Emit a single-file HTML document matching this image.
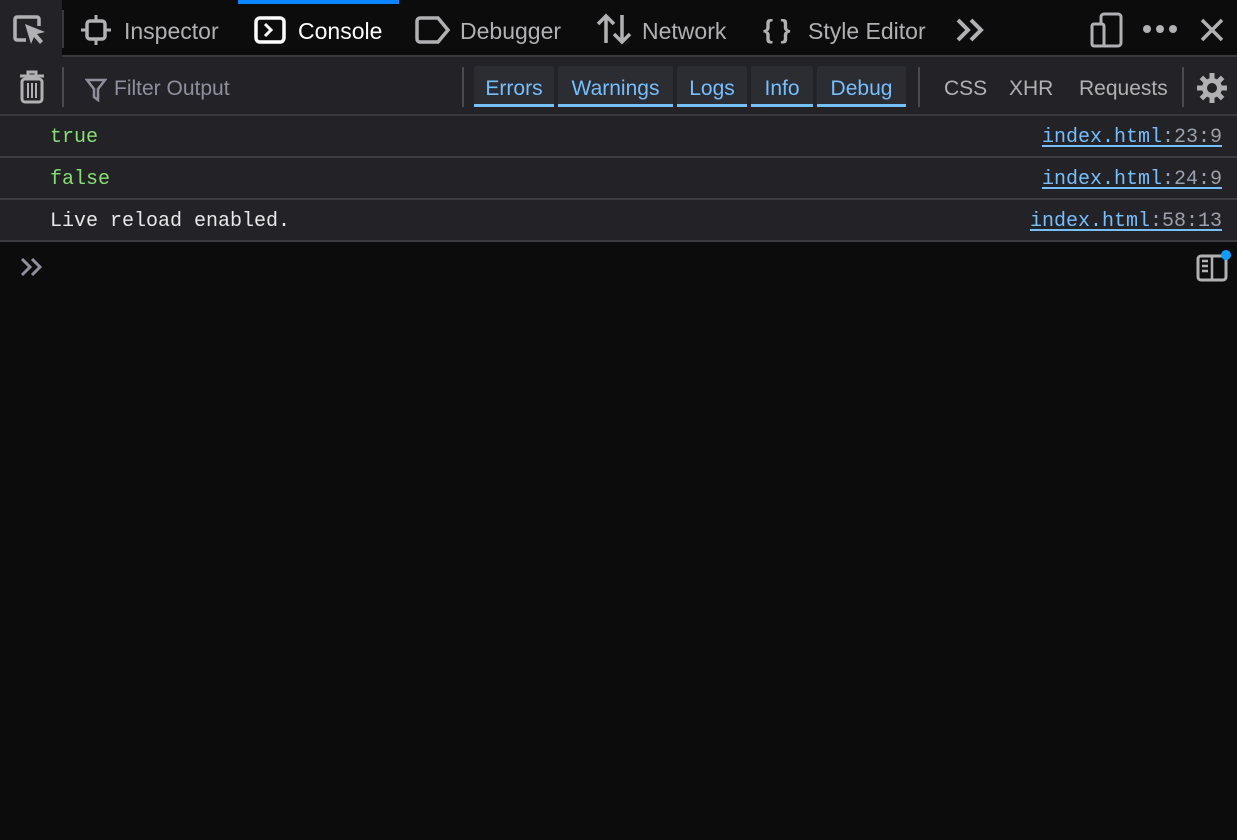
<!DOCTYPE html>
<html><head><meta charset="utf-8"><style>
*{margin:0;padding:0;box-sizing:border-box}
body{width:1237px;height:840px;background:#0c0c0d;font-family:"Liberation Sans",sans-serif;overflow:hidden;position:relative}
.abs{position:absolute}
#top{left:0;top:0;width:1237px;height:57px;background:#0c0c0d;border-bottom:2px solid #38383d}
.tab{position:absolute;top:0;height:57px;color:#b1b1b3;font-size:23px;line-height:62px}
#filter{left:0;top:57px;width:1237px;height:59px;background:#232327;border-bottom:2px solid #38383d}
.fb{position:absolute;top:9px;height:41px;background:#2c2c33;border-radius:3px 3px 0 0;border-bottom:3px solid #75bfff;color:#75bfff;font-size:21px;line-height:45px;text-align:center}
.ft{position:absolute;top:9px;height:41px;color:#b1b1b3;font-size:21px;line-height:45px}
.sep{position:absolute;width:2px;background:#4a4a4f}
.row{position:absolute;left:0;width:1237px;height:42px;background:#232327;border-bottom:2px solid #3b3b40;font-family:"Liberation Mono",monospace;font-size:20px;line-height:44px}
.row .m{position:absolute;left:50px}
.row .l{position:absolute;right:15px;color:#75bfff;text-decoration:underline;text-underline-offset:3px}
.row .l span{color:#9aa0ad}
</style></head><body>
<div id="top" class="abs">
 <div class="abs" style="left:0;top:0;width:62px;height:57px;background:#232327"></div>
 <svg class="abs" style="left:12px;top:14px" width="36" height="32" viewBox="0 0 36 32"><path d="M14 26H5a2 2 0 0 1-2-2V5a2 2 0 0 1 2-2h20a2 2 0 0 1 2 2v7" fill="none" stroke="#b1b1b3" stroke-width="3.5"/><path d="M13 10l20 8-8 2 6 7-3 3-6-7-3 7z" fill="#b1b1b3"/></svg>
 <div class="sep" style="left:62px;top:10px;height:38px;background:#38383d"></div>
 <svg class="abs" style="left:80px;top:14px" width="32" height="32" viewBox="0 0 32 32"><rect x="7" y="7" width="18" height="18" rx="3" fill="none" stroke="#b1b1b3" stroke-width="3.5"/><path d="M16 1v6M16 25v6M1 16h6M25 16h6" stroke="#b1b1b3" stroke-width="3"/></svg>
 <div class="tab" style="left:124px">Inspector</div>
 <div class="abs" style="left:238px;top:0;width:161px;height:4px;background:#0a84ff"></div>
 <svg class="abs" style="left:254px;top:16px" width="32" height="28" viewBox="0 0 32 28"><rect x="2" y="2" width="28" height="24" rx="4" fill="none" stroke="#fff" stroke-width="3.5"/><path d="M11 8l6 6-6 6" fill="none" stroke="#fff" stroke-width="3"/></svg>
 <div class="tab" style="left:298px;color:#fff">Console</div>
 <svg class="abs" style="left:415px;top:16px" width="36" height="28" viewBox="0 0 36 28"><path d="M5 2h18l10 12-10 12H5a3 3 0 0 1-3-3V5a3 3 0 0 1 3-3z" fill="none" stroke="#b1b1b3" stroke-width="3.5"/></svg>
 <div class="tab" style="left:460px">Debugger</div>
 <svg class="abs" style="left:596px;top:13px" width="36" height="32" viewBox="0 0 36 32"><path d="M10 30V3M2 11l8-8 8 8M26 2v27M18 21l8 8 8-8" fill="none" stroke="#b1b1b3" stroke-width="3.5"/></svg>
 <div class="tab" style="left:642px">Network</div>
 <div class="tab" style="left:763px;font-weight:bold;font-size:26px;line-height:58px">{ }</div>
 <div class="tab" style="left:808px">Style Editor</div>
 <svg class="abs" style="left:955px;top:18px" width="30" height="24" viewBox="0 0 30 24"><path d="M3 2l10 10-10 10M16 2l10 10-10 10" fill="none" stroke="#b1b1b3" stroke-width="4"/></svg>
 <svg class="abs" style="left:1090px;top:12px" width="34" height="36" viewBox="0 0 34 36"><rect x="11" y="2" width="20" height="32" rx="3" fill="none" stroke="#b1b1b3" stroke-width="3"/><rect x="2" y="12" width="12" height="22" rx="2" fill="#0c0c0d" stroke="#b1b1b3" stroke-width="3"/></svg>
 <svg class="abs" style="left:1142px;top:24px" width="36" height="10"><circle cx="5" cy="5" r="4" fill="#b1b1b3"/><circle cx="18" cy="5" r="4" fill="#b1b1b3"/><circle cx="31" cy="5" r="4" fill="#b1b1b3"/></svg>
 <svg class="abs" style="left:1200px;top:18px" width="24" height="24"><path d="M2 2l20 20M22 2L2 22" stroke="#b1b1b3" stroke-width="3.5"/></svg>
</div>
<div id="filter" class="abs">
 <svg class="abs" style="left:18px;top:13px" width="28" height="34" viewBox="0 0 28 34"><path d="M2 6h24M10 6V2h8v4" fill="none" stroke="#b1b1b3" stroke-width="3"/><rect x="4" y="9" width="20" height="23" rx="3" fill="none" stroke="#b1b1b3" stroke-width="3"/><path d="M10 13v15M14 13v15M18 13v15" stroke="#b1b1b3" stroke-width="2"/></svg>
 <div class="sep" style="left:62px;top:10px;height:40px"></div>
 <svg class="abs" style="left:85px;top:21px" width="22" height="24" viewBox="0 0 22 24"><path d="M2 2h18l-7 9v11l-4-3v-8z" fill="none" stroke="#8f8f9d" stroke-width="2.5"/></svg>
 <div class="ft" style="left:114px;color:#8f8f9d">Filter Output</div>
 <div class="sep" style="left:462px;top:10px;height:40px"></div>
 <div class="fb" style="left:474px;width:80px">Errors</div>
 <div class="fb" style="left:558px;width:115px">Warnings</div>
 <div class="fb" style="left:677px;width:70px">Logs</div>
 <div class="fb" style="left:751px;width:62px">Info</div>
 <div class="fb" style="left:817px;width:89px">Debug</div>
 <div class="sep" style="left:918px;top:10px;height:40px"></div>
 <div class="ft" style="left:944px">CSS</div>
 <div class="ft" style="left:1009px">XHR</div>
 <div class="ft" style="left:1079px">Requests</div>
 <div class="sep" style="left:1182px;top:10px;height:40px"></div>
 <svg class="abs" style="left:1195px;top:14px" width="34" height="34" viewBox="0 0 34 34"><g stroke="#b1b1b3" stroke-width="5"><path d="M17 2v30M2 17h30M6.4 6.4l21.2 21.2M27.6 6.4L6.4 27.6"/></g><circle cx="17" cy="17" r="10" fill="#b1b1b3"/><circle cx="17" cy="17" r="5" fill="#232327"/></svg>
</div>
<div class="row" style="top:116px"><span class="m" style="color:#86de74">true</span><span class="l">index.html<span>:23:9</span></span></div>
<div class="row" style="top:158px"><span class="m" style="color:#86de74">false</span><span class="l">index.html<span>:24:9</span></span></div>
<div class="row" style="top:200px"><span class="m" style="color:#e8e8ea">Live reload enabled.</span><span class="l">index.html<span>:58:13</span></span></div>
<svg class="abs" style="left:20px;top:257px" width="26" height="20" viewBox="0 0 26 20"><path d="M2 2l8 8-8 8M12 2l8 8-8 8" fill="none" stroke="#8f8f9d" stroke-width="3"/></svg>
<svg class="abs" style="left:1195px;top:248px" width="40" height="36" viewBox="0 0 40 36"><rect x="3" y="8" width="28" height="24" rx="3" fill="none" stroke="#b1b1b3" stroke-width="3"/><path d="M17 8v24M7 13h6M7 18h6M7 23h6" stroke="#b1b1b3" stroke-width="2.5"/><circle cx="31" cy="7" r="5" fill="#0a9dff"/></svg>
</body></html>
